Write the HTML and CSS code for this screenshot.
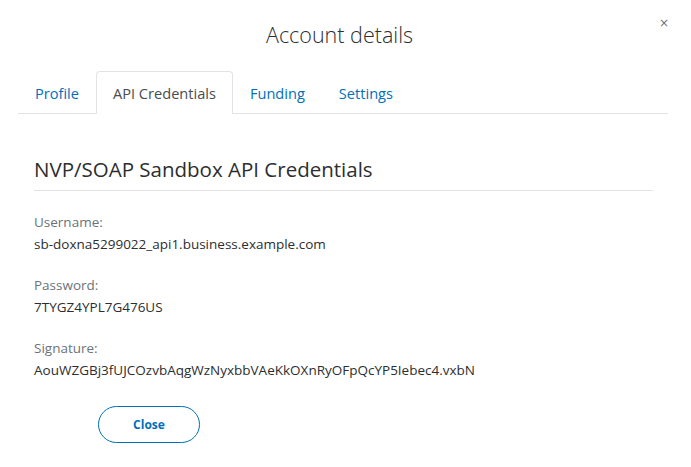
FILE: index.html
```html
<!DOCTYPE html>
<html lang="en">
<head>
<meta charset="utf-8">
<title>Account details</title>
<link rel="stylesheet" href="styles.css">
</head>
<body>
<div class="modal">
  <button class="close-x" aria-label="Close">&#215;</button>
  <h1 class="title">Account details</h1>
  <nav class="tabs">
    <a class="tab">Profile</a>
    <a class="tab active">API Credentials</a>
    <a class="tab">Funding</a>
    <a class="tab">Settings</a>
  </nav>
  <section class="panel">
    <h2 class="heading">NVP/SOAP Sandbox API Credentials</h2>
    <div class="field">
      <div class="label">Username:</div>
      <div class="value">sb-doxna5299022_api1.business.example.com</div>
    </div>
    <div class="field">
      <div class="label">Password:</div>
      <div class="value">7TYGZ4YPL7G476US</div>
    </div>
    <div class="field">
      <div class="label">Signature:</div>
      <div class="value">AouWZGBj3fUJCOzvbAqgWzNyxbbVAeKkOXnRyOFpQcYP5Iebec4.vxbN</div>
    </div>
    <div class="actions">
      <button class="btn">Close</button>
    </div>
  </section>
</div>
</body>
</html>
```
FILE: styles.css
```css
* { box-sizing: border-box; }
html, body { margin: 0; padding: 0; background: #fff; }
body {
  font-family: "Open Sans", "Liberation Sans", sans-serif;
  color: #2c2e2f;
  width: 691px;
  height: 467px;
  overflow: hidden;
}
.modal {
  position: relative;
  padding: 20px 23px 0 18px;
}
.close-x {
  position: absolute;
  top: 17px;
  right: 22px;
  border: 0;
  background: none;
  padding: 0;
  font-family: "DejaVu Sans", sans-serif;
  font-size: 12px;
  color: #6c7378;
  line-height: 1;
}
.title {
  margin: 0;
  padding-right: 7px;
  text-align: center;
  font-weight: 300;
  font-size: 21.5px;
  line-height: 30px;
  color: #2c2e2f;
}
.tabs {
  display: flex;
  margin-top: 21px;
  border-bottom: 1px solid #e1e3e4;
}
.tab {
  font-size: 14.6px;
  color: #0070ba;
  padding: 0 16px;
  height: 42px;
  line-height: 42px;
  border: 1px solid transparent;
  border-bottom: 0;
  border-radius: 4px 4px 0 0;
  margin-bottom: -1px;
}
.tab.active {
  color: #4a4c4e;
  background: #fff;
  border-color: #e1e3e4;
  height: 43px;
}
.panel {
  padding: 41px 15px 0 16px;
}
.heading {
  margin: 0;
  font-weight: 400;
  font-size: 20.5px;
  line-height: 28px;
  padding-bottom: 7px;
  border-bottom: 1px solid #e1e3e4;
}
.field {
  margin-top: 19px;
  font-size: 13.5px;
  line-height: 22px;
}
.field:first-of-type { margin-top: 20px; }
.label { color: #6c7378; }
.value { color: #2c2e2f; }
.actions {
  margin-top: 25px;
  padding-left: 64px;
}
.btn {
  width: 102px;
  height: 37px;
  border: 1px solid #0070ba;
  border-radius: 19px;
  background: #fff;
  color: #0070ba;
  font-family: inherit;
  font-weight: 700;
  font-size: 12px;
}
```
